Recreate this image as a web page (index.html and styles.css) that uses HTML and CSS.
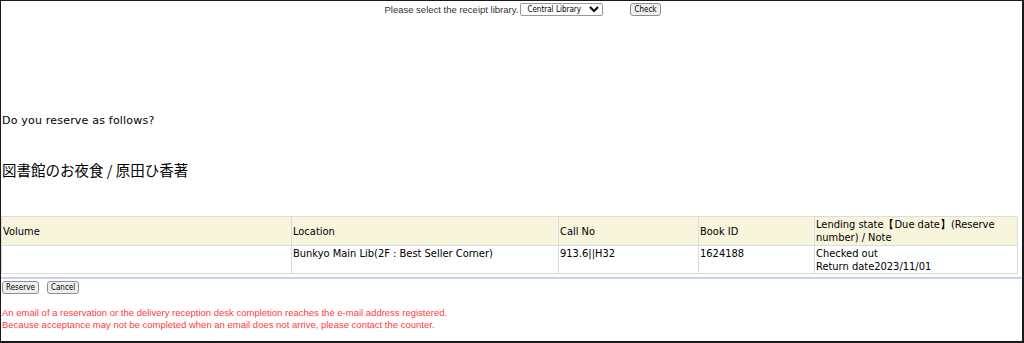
FILE: index.html
```html
<!DOCTYPE html>
<html lang="en">
<head>
  <meta charset="UTF-8">
  <title>Reserve</title>
  <link rel="stylesheet" href="styles.css">
</head>
<body>
  <div class="frame">
    <!-- Receipt library select -->
    <form class="library-form">
      <span class="library-label">Please select the receipt library.</span>
      <select class="library-select">
        <option>Central Library</option>
      </select>
      <button type="button" class="btn check-btn">Check</button>
    </form>

    <p class="question">Do you reserve as follows?</p>
    <h2 class="book-title">図書館のお夜食 / 原田ひ香著</h2>

    <!-- Holdings -->
    <table class="holdings">
      <tr>
        <th class="col-volume">Volume</th>
        <th class="col-location">Location</th>
        <th class="col-call">Call No</th>
        <th class="col-id">Book ID</th>
        <th class="col-state">Lending state【Due date】(Reserve number) / Note</th>
      </tr>
      <tr>
        <td></td>
        <td>Bunkyo Main Lib(2F : Best Seller Corner)</td>
        <td>913.6||H32</td>
        <td>1624188</td>
        <td>Checked out<br>Return date2023/11/01</td>
      </tr>
    </table>
    <div class="divider"></div>

    <div class="actions">
      <button type="button" class="btn">Reserve</button>
      <button type="button" class="btn">Cancel</button>
    </div>

    <p class="notice">An email of a reservation or the delivery reception desk completion reaches the e-mail address registered.<br>Because acceptance may not be completed when an email does not arrive, please contact the counter.</p>
  </div>
</body>
</html>
```

FILE: styles.css
```css
body {
  margin: 0;
  background: #fff;
  font-family: "Liberation Sans", Arial, sans-serif;
  color: #000;
}
.frame {
  height: 343px;
  box-sizing: border-box;
  border-top: 1px solid #1a1a1a;
  border-left: 1px solid #1a1a1a;
  border-right: 2px solid #1a1a1a;
  border-bottom: 2px solid #1a1a1a;
  overflow: hidden;
}
.library-form {
  display: flex;
  justify-content: center;
  align-items: center;
  margin: 0;
  padding: 1px 0 0 22px;
  height: 15px;
  font-size: 9.5px;
  color: #333;
}
.library-label {
  margin-right: 2px;
}
.library-select {
  width: 83px;
  height: 13px;
  padding: 0 0 0 2px;
  font-family: "DejaVu Sans Condensed", "DejaVu Sans", sans-serif;
  font-size: 8px;
  border: 1px solid #999;
  border-radius: 2px;
  background: #fff;
}
.btn {
  font-family: "DejaVu Sans Condensed", "DejaVu Sans", sans-serif;
  font-size: 8px;
  height: 13px;
  padding: 0 3px;
  line-height: 11px;
  background: #efefef;
  border: 1px solid #8f8f8f;
  border-radius: 3px;
  color: #000;
}
.check-btn {
  margin-left: 27px;
}
.question {
  margin: 97px 0 0 1px;
  font-family: "DejaVu Sans", sans-serif;
  font-size: 11px;
  letter-spacing: 0.2px;
  line-height: 13px;
}
.book-title {
  margin: 34px 0 0 1px;
  font-family: "Noto Sans CJK JP", sans-serif;
  font-weight: normal;
  font-size: 14.5px;
  line-height: 18px;
}
.holdings {
  margin: 37px 0 0 0;
  width: 1017px;
  border-collapse: collapse;
  font-family: "DejaVu Sans Condensed", "DejaVu Sans", sans-serif;
  font-size: 11px;
  line-height: 13px;
}
.holdings th,
.holdings td {
  border: 1px solid #dcdcdc;
  padding: 1px 1px;
  text-align: left;
  font-weight: normal;
}
.holdings th {
  background: #f7f5dc;
  height: 26px;
  vertical-align: middle;
}
.holdings td {
  height: 25px;
  vertical-align: top;
  padding: 1px 1px 0;
}
.col-volume { width: 287px; }
.col-location { width: 264px; }
.col-call { width: 137px; }
.col-id { width: 113px; }
.divider {
  margin-top: 3px;
  height: 2px;
  background: #c5d3ec;
}
.actions {
  display: flex;
  gap: 8px;
  padding: 2px 0 0 1px;
}
.notice {
  margin: 13px 0 0 1px;
  font-size: 9.5px;
  line-height: 12px;
  color: #ff3b3b;
}
```
